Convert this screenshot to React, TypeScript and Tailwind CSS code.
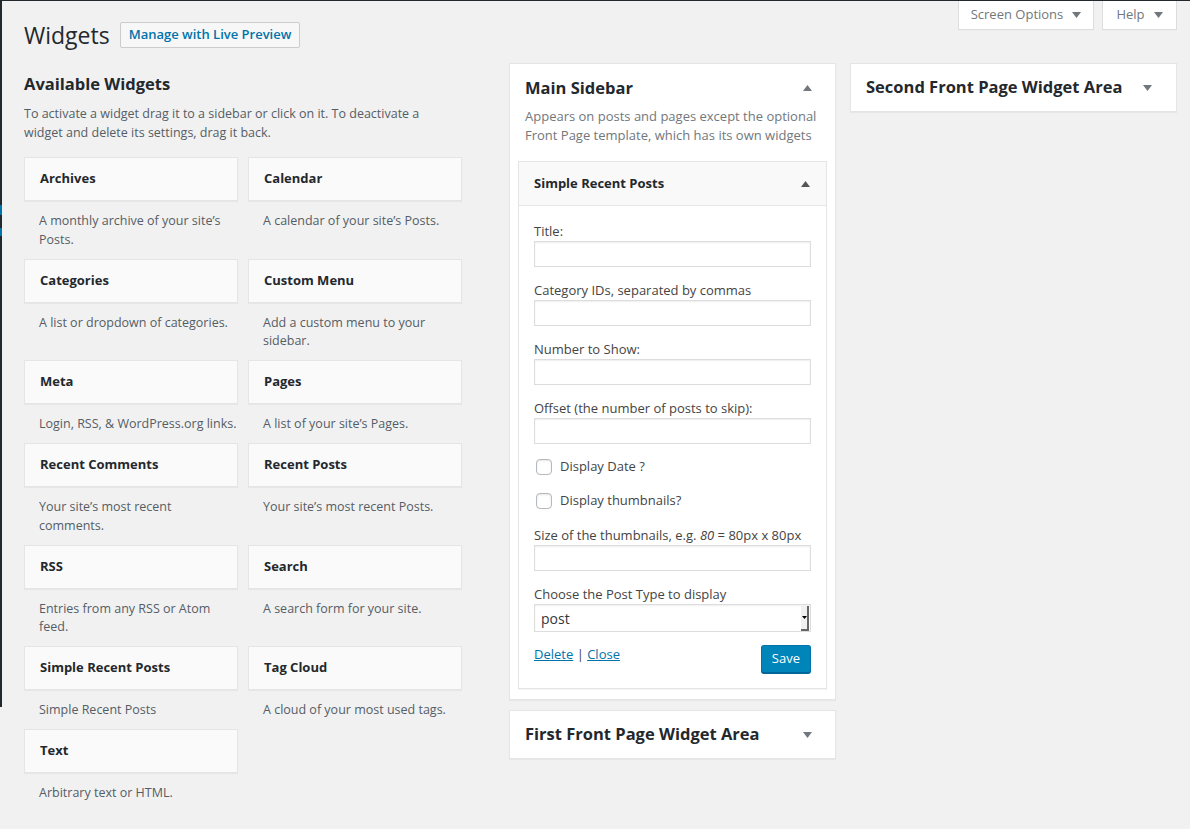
import React from 'react'

type Widget = { title: string; lines: string[] }

const rows: Array<[Widget, Widget | null]> = [
  [
    { title: `Archives`, lines: [`A monthly archive of your site’s`, `Posts.`] },
    { title: `Calendar`, lines: [`A calendar of your site’s Posts.`] },
  ],
  [
    { title: `Categories`, lines: [`A list or dropdown of categories.`] },
    { title: `Custom Menu`, lines: [`Add a custom menu to your`, `sidebar.`] },
  ],
  [
    { title: `Meta`, lines: [`Login, RSS, & WordPress.org links.`] },
    { title: `Pages`, lines: [`A list of your site’s Pages.`] },
  ],
  [
    { title: `Recent Comments`, lines: [`Your site’s most recent`, `comments.`] },
    { title: `Recent Posts`, lines: [`Your site’s most recent Posts.`] },
  ],
  [
    { title: `RSS`, lines: [`Entries from any RSS or Atom`, `feed.`] },
    { title: `Search`, lines: [`A search form for your site.`] },
  ],
  [
    { title: `Simple Recent Posts`, lines: [`Simple Recent Posts`] },
    { title: `Tag Cloud`, lines: [`A cloud of your most used tags.`] },
  ],
  [{ title: `Text`, lines: [`Arbitrary text or HTML.`] }, null],
]

const Arrow = ({ up = false, color = '#72777c' }: { up?: boolean; color?: string }) => (
  <svg width="9" height="6" viewBox="0 0 9 6" className="shrink-0">
    {up ? <path d="M0 6 L4.5 0 L9 6 Z" fill={color} /> : <path d="M0 0 L9 0 L4.5 6 Z" fill={color} />}
  </svg>
)

const WidgetCard = ({ w }: { w: Widget }) => (
  <div>
    <div className="flex h-[44px] items-center border border-[#e5e5e5] bg-[#fafafa] px-[15px] text-[13px] font-bold text-[#23282d] shadow-[0_1px_1px_rgba(0,0,0,0.04)]">
      {w.title}
    </div>
    <div className="px-[15px] pb-[9.5px] pt-[11px] text-[12.5px] leading-[18.5px] text-[#555d66]">
      {w.lines.map((l) => (
        <div key={l} className="whitespace-nowrap">
          {l}
        </div>
      ))}
    </div>
  </div>
)

const Field = ({ label, children }: { label: React.ReactNode; children?: React.ReactNode }) => (
  <div className="mb-[14px]">
    <div className="mb-px text-[13px] leading-[18px] text-[#444]">{label}</div>
    {children ?? <div className="h-[26px] w-full border border-[#ddd] bg-white shadow-[inset_0_1px_2px_rgba(0,0,0,0.07)]" />}
  </div>
)

const Check = ({ label }: { label: string }) => (
  <div className="flex h-[18px] items-center gap-2 text-[13px] text-[#444]">
    <span className="ml-[2px] h-4 w-4 rounded-[4px] border border-[#b4b9be] bg-white shadow-[inset_0_1px_2px_rgba(0,0,0,0.1)]" />
    {label}
  </div>
)

const AreaBox = ({ title, className = '' }: { title: string; className?: string }) => (
  <div className={`flex h-[49px] items-center justify-between border border-[#e5e5e5] bg-white pl-[15px] pr-[23px] shadow-[0_1px_1px_rgba(0,0,0,0.04)] ${className}`}>
    <span className="text-[16.5px] font-bold text-[#23282d]">{title}</span>
    <Arrow />
  </div>
)

export default function App() {
  return (
    <div className="min-h-[829px] bg-[#f1f1f1] font-['Open_Sans','Noto_Sans',sans-serif] text-[#444]">
      <div className="h-px bg-[#23282d]" />
      <div className="flex">
        {/* admin menu edge */}
        <div className="flex h-[706px] w-[2px] shrink-0 flex-col bg-[#23282d]">
          <div className="mt-[204px] h-[10px] bg-[#0073aa]" />
          <div className="mt-[13px] h-[8px] bg-[#0073aa]" />
        </div>

        <div className="flex-1 pl-[22px] pr-[13px]">
          <div className="flex items-start justify-between">
            <div className="flex items-center gap-[10px] pt-[21px]">
              <h1 className="text-[23px] leading-[26px] text-[#23282d]">Widgets</h1>
              <span className="flex h-[26px] items-center rounded-[2px] border border-[#ccc] bg-[#f7f7f7] px-2 text-[13px] font-semibold text-[#0073aa]">
                Manage with Live Preview
              </span>
            </div>
            <div className="flex gap-2">
              <div className="flex h-[29px] w-[136px] items-center justify-center gap-[9px] border border-t-0 border-[#ddd] bg-white text-[13px] text-[#72777c] shadow-[0_1px_1px_-1px_rgba(0,0,0,0.1)]">
                Screen Options <Arrow />
              </div>
              <div className="flex h-[29px] w-[75px] items-center justify-center gap-[9px] border border-t-0 border-[#ddd] bg-white text-[13px] text-[#72777c] shadow-[0_1px_1px_-1px_rgba(0,0,0,0.1)]">
                Help <Arrow />
              </div>
            </div>
          </div>

          <div className="mt-[15px] flex items-start">
            {/* available widgets */}
            <div className="w-[438px] shrink-0">
              <h2 className="mt-[9px] text-[16.5px] font-bold leading-[24px] text-[#23282d]">Available Widgets</h2>
              <p className="mt-[8px] mb-[15px] text-[12.5px] leading-[19px] text-[#555d66]">
                To activate a widget drag it to a sidebar or click on it. To deactivate a<br />
                widget and delete its settings, drag it back.
              </p>
              <div className="grid grid-cols-2 items-start gap-x-[10px]">
                {rows.map(([a, b]) => (
                  <React.Fragment key={a.title}>
                    <WidgetCard w={a} />
                    {b ? <WidgetCard w={b} /> : <div />}
                  </React.Fragment>
                ))}
              </div>
            </div>

            {/* main sidebar */}
            <div className="ml-[47px] w-[327px] shrink-0">
              <div className="border border-[#e5e5e5] bg-white px-2 pb-[10px] shadow-[0_1px_1px_rgba(0,0,0,0.04)]">
                <div className="flex items-center justify-between pl-[7px] pr-[15px] pt-[12px]">
                  <span className="text-[16.5px] font-bold leading-[24px] text-[#23282d]">Main Sidebar</span>
                  <Arrow up />
                </div>
                <p className="mt-[7px] pl-[7px] text-[13px] leading-[19px] text-[#72777c]">
                  Appears on posts and pages except the optional<br />
                  Front Page template, which has its own widgets
                </p>
                <div className="mt-[16px] border border-[#e5e5e5] bg-white shadow-[0_1px_1px_rgba(0,0,0,0.04)]">
                  <div className="flex h-[44px] items-center justify-between border-b border-[#e5e5e5] bg-[#f9f9f9] pl-[15px] pr-[16px]">
                    <span className="text-[13px] font-bold text-[#23282d]">Simple Recent Posts</span>
                    <Arrow up color="#555" />
                  </div>
                  <div className="px-[15px] pb-[15px] pt-[16px]">
                    <Field label="Title:" />
                    <Field label="Category IDs, separated by commas" />
                    <Field label="Number to Show:" />
                    <Field label="Offset (the number of posts to skip):" />
                    <Check label="Display Date ?" />
                    <div className="h-4" />
                    <Check label="Display thumbnails?" />
                    <div className="h-4" />
                    <Field
                      label={
                        <>
                          Size of the thumbnails, e.g. <em>80</em> = 80px x 80px
                        </>
                      }
                    />
                    <div>
                      <div className="mb-px text-[13px] leading-[18px] text-[#444]">Choose the Post Type to display</div>
                      <div className="flex h-[28px] items-stretch border border-[#ddd] bg-white shadow-[inset_0_1px_2px_rgba(0,0,0,0.07)]">
                        <span className="flex flex-1 items-center pl-[6px] text-[14px] text-[#32373c]">post</span>
                        <span className="mr-px mt-px flex w-[8px] items-center justify-center border-r-[2px] border-b-[2px] border-[#666] bg-[#f0f0f0]">
                          <svg width="5" height="3" viewBox="0 0 5 3">
                            <path d="M0 0 L5 0 L2.5 3 Z" fill="#000" />
                          </svg>
                        </span>
                      </div>
                    </div>
                    <div className="mt-[13px] flex items-start justify-between">
                      <div className="text-[13px] leading-[18px] text-[#444]">
                        <span className="text-[#0073aa] underline">Delete</span> |{' '}
                        <span className="text-[#0073aa] underline">Close</span>
                      </div>
                      <span className="flex h-[28px] items-center rounded-[3px] border border-[#0073aa] border-b-[#006799] bg-[#0085ba] px-[10px] text-[13px] text-white shadow-[0_1px_0_#006799]">
                        Save
                      </span>
                    </div>
                  </div>
                </div>
              </div>
              <AreaBox title="First Front Page Widget Area" className="mt-[10px]" />
            </div>

            {/* right column */}
            <div className="ml-[14px] w-[327px] shrink-0">
              <AreaBox title="Second Front Page Widget Area" className="h-[48px] pr-[24px]" />
            </div>
          </div>
        </div>
      </div>
    </div>
  )
}
